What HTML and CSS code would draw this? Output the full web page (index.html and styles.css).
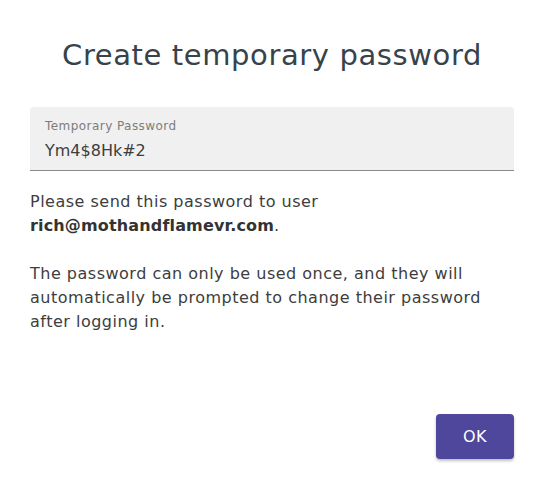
FILE: index.html
```
<!DOCTYPE html>
<html>
<head>
<meta charset="utf-8">
<link rel="stylesheet" href="styles.css">
</head>
<body>
<div class="dialog">
  <h1 class="title">Create temporary password</h1>
  <div class="field">
    <div class="field-label">Temporary Password</div>
    <div class="field-value">Ym4$8Hk#2</div>
  </div>
  <div class="content">
    <p class="para">Please send this password to user <b class="email">rich@mothandflamevr.com</b>.</p>
    <p class="para">The password can only be used once, and they will automatically be prompted to change their password after logging in.</p>
  </div>
  <div class="actions">
    <button class="ok">OK</button>
  </div>
</div>
</body>
</html>
```
FILE: styles.css
```
html, body { margin: 0; padding: 0; background: #fff; }
body { width: 550px; height: 494px; overflow: hidden; font-family: "DejaVu Sans", sans-serif; }
.dialog { padding: 0 36px 0 30px; box-sizing: border-box; width: 550px; height: 494px; display: flex; flex-direction: column; }
.title { margin: 37px 0 0 0; font-weight: 400; font-size: 29px; line-height: 36px; color: #37434b; text-align: center; letter-spacing: 0.6px; }
.field { margin-top: 34px; background: #f0f0f0; border-radius: 4px 4px 0 0; border-bottom: 1px solid #8a8a8a; height: 63px; padding: 0 15px; display: flex; flex-direction: column; }
.field-label { margin-top: 11px; font-size: 12px; line-height: 16px; color: #7d7d7d; letter-spacing: 0.45px; }
.field-value { margin-top: 7px; font-size: 16px; line-height: 20px; color: #3d3d3d; }
.content { margin-top: 19px; }
.para { margin: 0 0 24px 0; font-size: 16px; line-height: 24px; color: #3d3d3d; letter-spacing: 0.5px; }
.email { font-weight: 700; color: #333; letter-spacing: 0.15px; }
.actions { margin-top: auto; margin-bottom: 35px; display: flex; justify-content: flex-end; }
.ok { width: 78px; height: 45px; border: none; border-radius: 4px; background: #4f479b; color: #fff; font-family: "DejaVu Sans", sans-serif; font-size: 16px; letter-spacing: 0.5px; box-shadow: 0 2px 3px rgba(0,0,0,0.25); }
```
